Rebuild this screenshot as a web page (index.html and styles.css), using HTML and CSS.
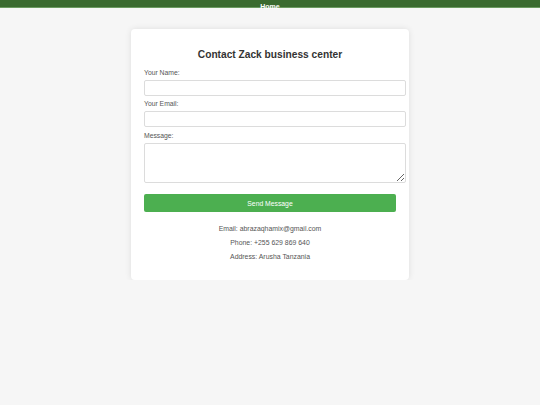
FILE: index.html
```html
<!DOCTYPE html>
<html lang="en">
<head>
<meta charset="utf-8">
<title>Contact</title>
<link rel="stylesheet" href="styles.css">
</head>
<body>
<nav class="topbar"><a class="topbar-link" href="#">Home</a></nav>
<main class="card">
  <h2 class="title">Contact Zack business center</h2>
  <form class="form">
    <label class="label" for="name">Your Name:</label>
    <input class="field" id="name" type="text">
    <label class="label" for="email">Your Email:</label>
    <input class="field" id="email" type="email">
    <label class="label label-msg" for="msg">Message:</label>
    <textarea class="field area" id="msg"></textarea>
    <button class="send" type="button">Send Message</button>
  </form>
  <div class="info">
    <p class="info-line">Email: abrazaqhamix@gmail.com</p>
    <p class="info-line">Phone: +255 629 869 640</p>
    <p class="info-line">Address: Arusha Tanzania</p>
  </div>
</main>
</body>
</html>
```
FILE: styles.css
```css
html, body {
  margin: 0;
  padding: 0;
}
body {
  background: #f6f6f6;
  font-family: "Liberation Sans", Arial, sans-serif;
  color: #333;
}
.topbar {
  background: #3a6a2f;
  height: 7px;
  line-height: 7px;
  text-align: center;
  border-bottom: 1px solid #6a9a5f;
}
.topbar-link {
  color: #fff;
  text-decoration: none;
  font-weight: bold;
  font-size: 7px;
}
.card {
  width: 252px;
  margin: 21px auto 0;
  padding: 13px;
  background: #fff;
  border-radius: 4px;
  box-shadow: 0 0 6px rgba(0, 0, 0, 0.1);
}
.title {
  margin: 7px 0 8px;
  font-size: 10.2px;
  line-height: 12px;
  text-align: center;
  color: #333;
}
.form {
  display: block;
}
.label {
  display: block;
  font-size: 6.8px;
  line-height: 8px;
  margin-bottom: 3px;
  color: #555;
}
.label-msg {
  padding-top: 1px;
}
.field {
  display: block;
  width: 100%;
  height: 6px;
  padding: 4px;
  margin: 0 0 4px;
  border: 1px solid #dcdcdc;
  border-radius: 2px;
  font-size: 6.8px;
  font-family: inherit;
  background: #fff;
  box-sizing: content-box;
}
.area {
  height: 30px;
  margin-bottom: 11px;
  resize: vertical;
}
.send {
  display: block;
  width: 100%;
  height: 18px;
  padding: 0;
  border: none;
  border-radius: 2px;
  background: #4caf50;
  color: #fff;
  font-size: 6.8px;
  font-family: inherit;
}
.info {
  margin-top: 13px;
  text-align: center;
}
.info-line {
  margin: 0 0 6px;
  font-size: 6.9px;
  line-height: 8px;
  color: #555;
}
.info-line:last-child {
  margin-bottom: 6px;
}
```
